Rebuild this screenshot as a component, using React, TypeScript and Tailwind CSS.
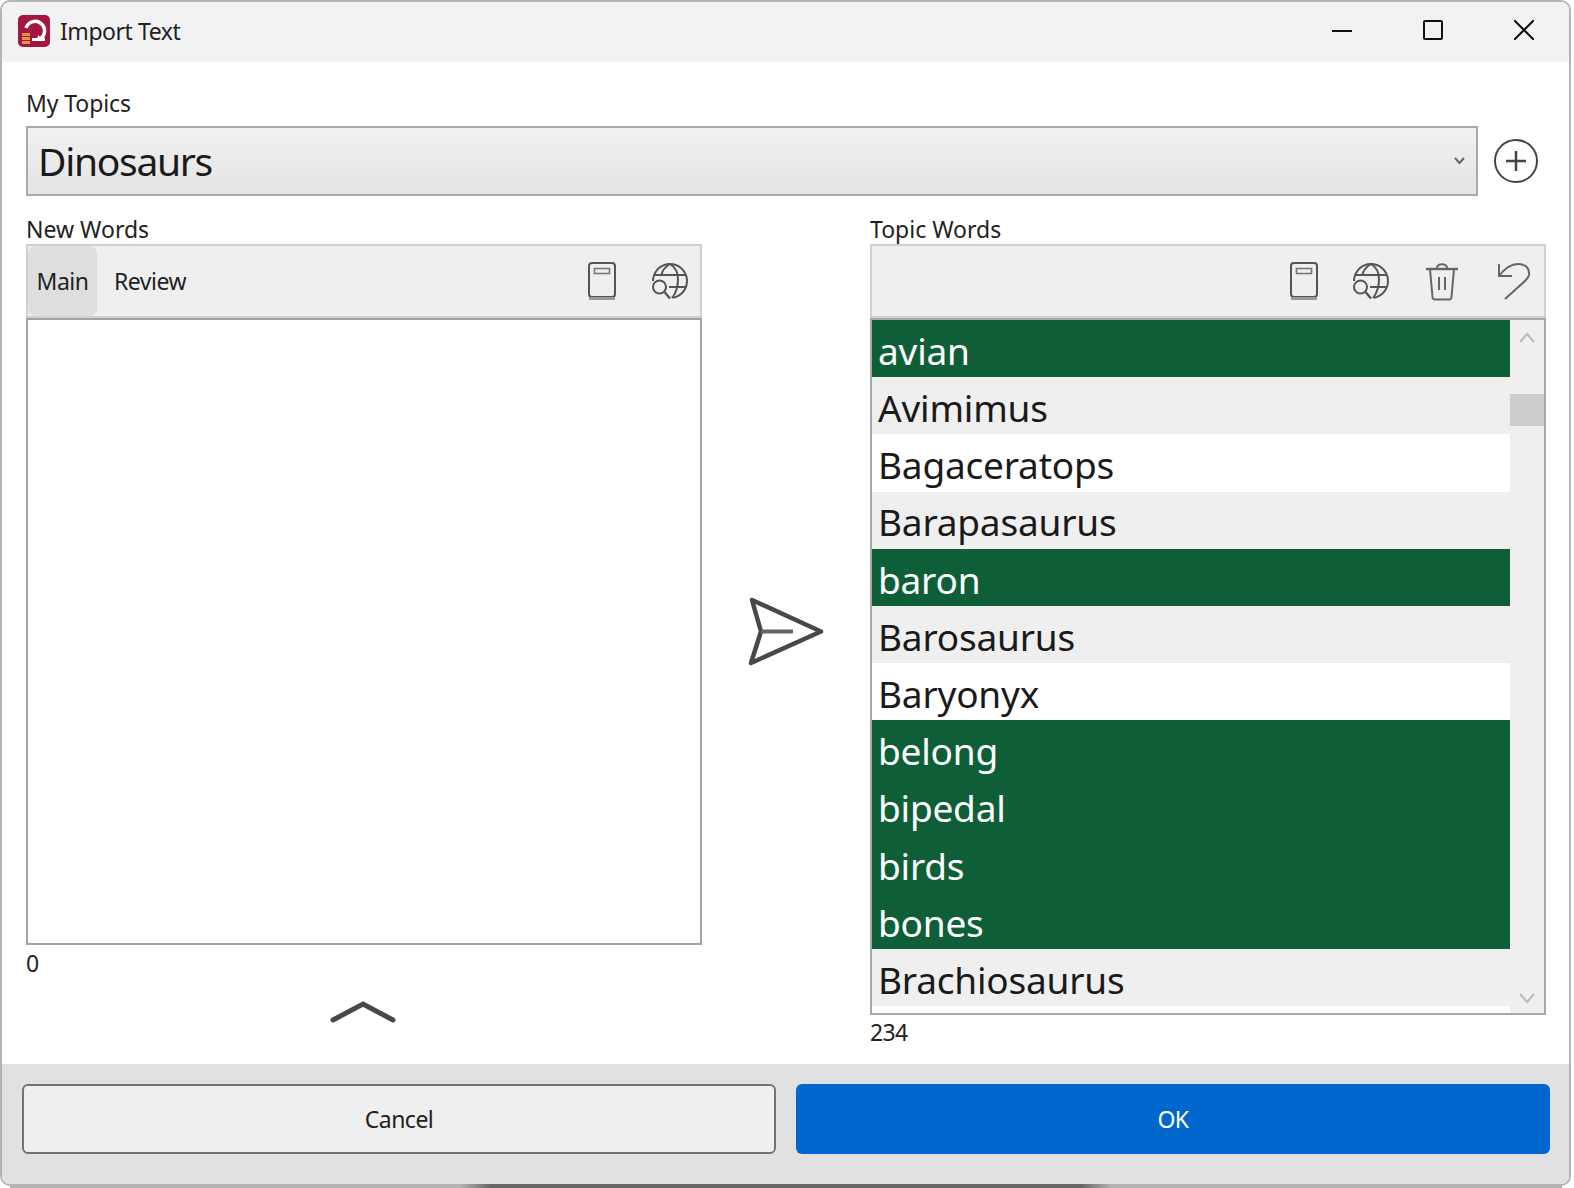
import type { ReactNode } from "react";

type Word = { text: string; kind: "green" | "gray" | "white" };

const words: Word[] = [
  { text: "avian", kind: "green" },
  { text: "Avimimus", kind: "gray" },
  { text: "Bagaceratops", kind: "white" },
  { text: "Barapasaurus", kind: "gray" },
  { text: "baron", kind: "green" },
  { text: "Barosaurus", kind: "gray" },
  { text: "Baryonyx", kind: "white" },
  { text: "belong", kind: "green" },
  { text: "bipedal", kind: "green" },
  { text: "birds", kind: "green" },
  { text: "bones", kind: "green" },
  { text: "Brachiosaurus", kind: "gray" },
];

function BookIcon() {
  return (
    <svg width="28" height="39" viewBox="0 0 28 39" fill="none">
      <rect x="1" y="1" width="26" height="34" rx="3" stroke="#555" strokeWidth="2" />
      <rect x="6.5" y="6.5" width="15" height="5" stroke="#777" strokeWidth="1.6" />
      <path d="M1 36.500h26" stroke="#999" strokeWidth="3" />
    </svg>
  );
}

function GlobeIcon() {
  return (
    <svg width="38" height="38" viewBox="0 0 38 38" fill="none" stroke="#555" strokeWidth="2">
      <path d="M2 19A17 17 0 1 1 22 35.700" />
      <path d="M3 13h32M18 25h17" />
      <path d="M19 2C14 5 11 9 10.500 13" />
      <path d="M19 2C24 5 27 11 27 17C27 25 25 31 21 36" />
      <circle cx="8.500" cy="25" r="6.500" />
      <path d="M13.500 30l5.500 6.500" strokeWidth="2.400" />
    </svg>
  );
}

function TrashIcon() {
  return (
    <svg width="34" height="39" viewBox="0 0 34 39" fill="none" stroke="#666" strokeWidth="2">
      <path d="M1 7h32" strokeWidth="2.400" />
      <path d="M12 6c0-5 10-5 10 0" />
      <path d="M5 7l2.500 28c.1 1.500 1 2.500 2.500 2.500h14c1.500 0 2.400-1 2.500-2.500L29 7" />
      <path d="M14 15v13M20 15v13" />
    </svg>
  );
}

function UndoIcon() {
  return (
    <svg width="34" height="38" viewBox="0 0 34 38" fill="none" stroke="#666" strokeWidth="2">
      <path d="M2 2v12h13" />
      <path d="M2 14C8 6 14 2 21 2c8 0 12 5 11 11c-.4 2-2 4-3.500 5.500L8 37" />
    </svg>
  );
}

function Logo() {
  return (
    <div className="w-8 h-8 rounded-[5px] bg-[#a3163d] shrink-0">
      <svg width="32" height="32" viewBox="0 0 32 32" fill="none">
        <path d="M8 13A9.500 9.500 0 1 1 22 24" stroke="#fff" strokeWidth="3.500" />
        <path d="M14 23h13v3H14z" fill="#fff" />
        <path d="M20 20l6 6h-7z" fill="#fff" />
        <path d="M4 18h8v3H4zM4 22h8v3H4zM4 26h8v3H4z" fill="#e0964a" />
      </svg>
    </div>
  );
}

function PanelLabel({ children }: { children: ReactNode }) {
  return <div className="h-[28px] text-[23px] leading-[26px] text-[#222]">{children}</div>;
}

function WordRow({ word }: { word: Word }) {
  const colors = {
    green: "bg-[#0e5f37] text-white",
    gray: "bg-[#efefef] text-[#1a1a1a]",
    white: "bg-white text-[#1a1a1a]",
  };
  return (
    <div className={`h-[57.2px] pl-[6px] pt-[4px] flex items-center text-[37px] tracking-[-0.2px] ${colors[word.kind]}`}>
      {word.text}
    </div>
  );
}

export default function App() {
  return (
    <div className="w-[1574px] h-[1188px] bg-white overflow-hidden font-['Noto_Sans',sans-serif]">
      <div className="w-[1571px] h-[1186px] border-2 border-[#b4b4b4] rounded-[10px] overflow-hidden flex flex-col bg-white">
        {/* title bar */}
        <div className="h-[60px] bg-[#f2f2f2] flex items-center pl-[16px] pb-[2px] shrink-0">
          <Logo />
          <span className="ml-[10px] text-[23px] text-[#222] tracking-[-0.45px]">Import Text</span>
          <div className="ml-auto flex items-center gap-[71px] pr-[35px] pb-[2px]">
            <svg width="20" height="20" viewBox="0 0 20 20"><path d="M0 11h20" stroke="#111" strokeWidth="2" /></svg>
            <svg width="20" height="20" viewBox="0 0 20 20" fill="none"><rect x="1" y="1" width="18" height="18" rx="1" stroke="#111" strokeWidth="2" /></svg>
            <svg width="20" height="20" viewBox="0 0 20 20"><path d="M0 0l20 20M20 0L0 20" stroke="#111" strokeWidth="2" /></svg>
          </div>
        </div>

        {/* body */}
        <div className="flex-1 pl-[24px] flex flex-col">
          <div className="h-[64px] flex items-end pb-[9px] text-[23px] leading-[28px] text-[#222] tracking-[-0.1px]">My Topics</div>
          <div className="flex items-center">
            <div className="w-[1452px] h-[70px] border-2 border-[#a9a9a9] bg-linear-to-b from-[#f1f1f1] to-[#e4e4e4] flex items-center pl-[10px]">
              <span className="text-[39px] text-[#1a1a1a] tracking-[-1.3px] mt-[1px]">Dinosaurs</span>
              <svg className="ml-auto mr-[11px]" width="11" height="8" viewBox="0 0 11 8" fill="none">
                <path d="M1 1l4.500 5L10 1" stroke="#666" strokeWidth="2" />
              </svg>
            </div>
            <svg className="ml-[15px]" width="46" height="46" viewBox="0 0 46 46" fill="none" stroke="#444">
              <circle cx="23" cy="23" r="21" strokeWidth="2" />
              <path d="M13 23h20M23 13v20" strokeWidth="2.500" />
            </svg>
          </div>

          <div className="flex mt-[20px]">
            {/* left panel */}
            <div className="w-[676px] flex flex-col">
              <PanelLabel>New Words</PanelLabel>
              <div className="h-[74px] bg-[#efefef] border-2 border-[#d0d0d0] flex items-center text-[23px] text-[#222] tracking-[-0.5px]">
                <div className="w-[69px] h-[70px] bg-[#dedede] rounded-[8px] flex items-center justify-center">Main</div>
                <span className="ml-[17px]">Review</span>
                <div className="ml-auto pr-[11px] flex items-center gap-[35px]">
                  <BookIcon />
                  <GlobeIcon />
                </div>
              </div>
              <div className="h-[627px] border-2 border-[#a3a3a3] bg-white" />
              <div className="h-[36px] pt-[2px] text-[23px] leading-[32px] text-[#222]">0</div>
              <div className="flex justify-center pt-[19px] pr-[2px]">
                <svg width="68" height="24" viewBox="0 0 68 24" fill="none">
                  <path d="M4 20L34 4L64 20" stroke="#484848" strokeWidth="5" strokeLinecap="round" />
                </svg>
              </div>
            </div>

            {/* send */}
            <div className="w-[168px] flex justify-center pt-[381px]">
              <svg width="76" height="69" viewBox="0 0 76 69" fill="none" stroke="#484848">
                <path d="M4 3L73 34.500L3 66L13 34.500Z" strokeWidth="4.500" strokeLinejoin="round" />
                <path d="M13 34.500H45" stroke="#666" strokeWidth="4" />
              </svg>
            </div>

            {/* right panel */}
            <div className="w-[676px] flex flex-col">
              <PanelLabel>Topic Words</PanelLabel>
              <div className="h-[74px] bg-[#efefef] border-2 border-[#d0d0d0] flex items-center justify-end pr-[13px]">
                <BookIcon />
                <div className="w-[34px]" />
                <GlobeIcon />
                <div className="w-[35px]" />
                <TrashIcon />
                <div className="w-[38px]" />
                <UndoIcon />
              </div>
              <div className="h-[697px] border-2 border-[#a8a8a8] bg-white flex overflow-hidden">
                <div className="w-[638px] shrink-0">
                  {words.map((w) => (
                    <WordRow key={w.text} word={w} />
                  ))}
                </div>
                <div className="flex-1 bg-[#efefef] flex flex-col items-center">
                  <svg className="mt-[12px] shrink-0" width="16" height="12" viewBox="0 0 16 12" fill="none"><path d="M1 10l7-8l7 8" stroke="#bbb" strokeWidth="2" /></svg>
                  <div className="w-full h-[32px] mt-[50px] bg-[#cccccc] shrink-0" />
                  <svg className="mt-[566px] shrink-0" width="16" height="12" viewBox="0 0 16 12" fill="none"><path d="M1 2l7 8l7-8" stroke="#bbb" strokeWidth="2" /></svg>
                </div>
              </div>
              <div className="pt-[2px] text-[23px] leading-[30px] text-[#222] tracking-[-0.7px]">234</div>
            </div>
          </div>
        </div>

        {/* footer */}
        <div className="h-[120px] bg-[#e1e1e1] shrink-0 flex pt-[20px] pl-[20px] gap-[20px] text-[23px] tracking-[-0.5px]">
          <div className="w-[754px] h-[70px] bg-[#efefef] border-2 border-[#727272] rounded-[6px] flex items-center justify-center text-[#222]">Cancel</div>
          <div className="w-[754px] h-[70px] bg-[#0067cf] rounded-[6px] flex items-center justify-center text-white">OK</div>
        </div>
      </div>
      {/* window shadow along the bottom edge */}
      <div className="relative -mt-[2px] ml-[10px] w-[1552px] h-[4px] bg-[linear-gradient(90deg,#b4b4b4_0%,#b4b4b4_29%,#666666_31%,#666666_69%,#b4b4b4_71%,#b4b4b4_100%)]" />
    </div>
  );
}
